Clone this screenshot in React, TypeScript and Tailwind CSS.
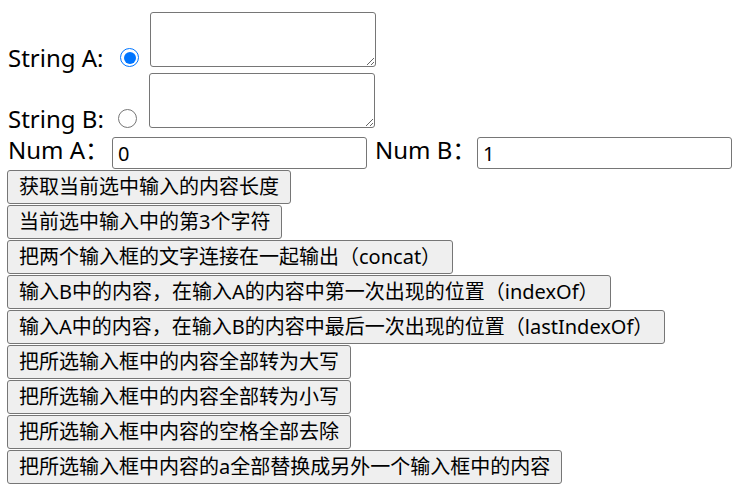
import React from "react";

const buttons = [
  "获取当前选中输入的内容长度",
  "当前选中输入中的第3个字符",
  "把两个输入框的文字连接在一起输出（concat）",
  "输入B中的内容，在输入A的内容中第一次出现的位置（indexOf）",
  "输入A中的内容，在输入B的内容中最后一次出现的位置（lastIndexOf）",
  "把所选输入框中的内容全部转为大写",
  "把所选输入框中的内容全部转为小写",
  "把所选输入框中内容的空格全部去除",
  "把所选输入框中内容的a全部替换成另外一个输入框中的内容",
];

function Radio({ checked }: { checked?: boolean }) {
  return checked ? (
    <span className="flex h-[19px] w-[19px] shrink-0 items-center justify-center rounded-full border-[1.5px] border-[#0075ff] bg-white">
      <span className="h-[12px] w-[12px] rounded-full bg-[#0075ff]" />
    </span>
  ) : (
    <span className="block h-[19px] w-[19px] shrink-0 rounded-full border-[1.5px] border-[#767676] bg-white" />
  );
}

function StringRow({ label, checked, width, gap }: { label: string; checked?: boolean; width: string; gap: string }) {
  return (
    <div className="flex items-end">
      <span className={`-mb-[3px] shrink-0 text-[24px] leading-[24px] whitespace-pre ${width}`}>{label}</span>
      <Radio checked={checked} />
      <textarea className={`h-[55px] w-[226px] resize rounded-[3px] border-[1.5px] border-[#767676] bg-white ${gap}`} />
    </div>
  );
}

export default function App() {
  return (
    <div className="min-h-screen bg-white pl-2 pt-[12px] text-black font-['Noto_Sans','Noto_Sans_CJK_SC',sans-serif]">
      <div className="flex flex-col gap-[6px]">
        <StringRow label="String A:" checked width="w-[112px]" gap="ml-[11px]" />
        <StringRow label="String B:" width="w-[110px]" gap="ml-[12px]" />
      </div>

      <div className="mt-[9px] flex items-end">
        <span className="mb-[7px] w-[104px] shrink-0 text-[24px] leading-[24px] whitespace-nowrap">Num A：</span>
        <input
          type="text"
          defaultValue="0"
          className="h-[32px] w-[255px] rounded-[3px] border-[1.5px] border-[#767676] px-[5px] text-[20px] outline-none"
        />
        <span className="mb-[7px] ml-[8px] w-[102px] shrink-0 text-[24px] leading-[24px] whitespace-nowrap">Num B：</span>
        <input
          type="text"
          defaultValue="1"
          className="h-[32px] w-[255px] rounded-[3px] border-[1.5px] border-[#767676] px-[5px] text-[20px] outline-none"
        />
      </div>

      <div className="mt-[1px] -ml-px flex flex-col items-start gap-px">
        {buttons.map((b) => (
          <button
            key={b}
            className="h-[34px] rounded-[3px] border-[1.5px] border-[#767676] bg-[#efefef] px-[11px] text-[20px] leading-none whitespace-nowrap"
          >
            {b}
          </button>
        ))}
      </div>
    </div>
  );
}
